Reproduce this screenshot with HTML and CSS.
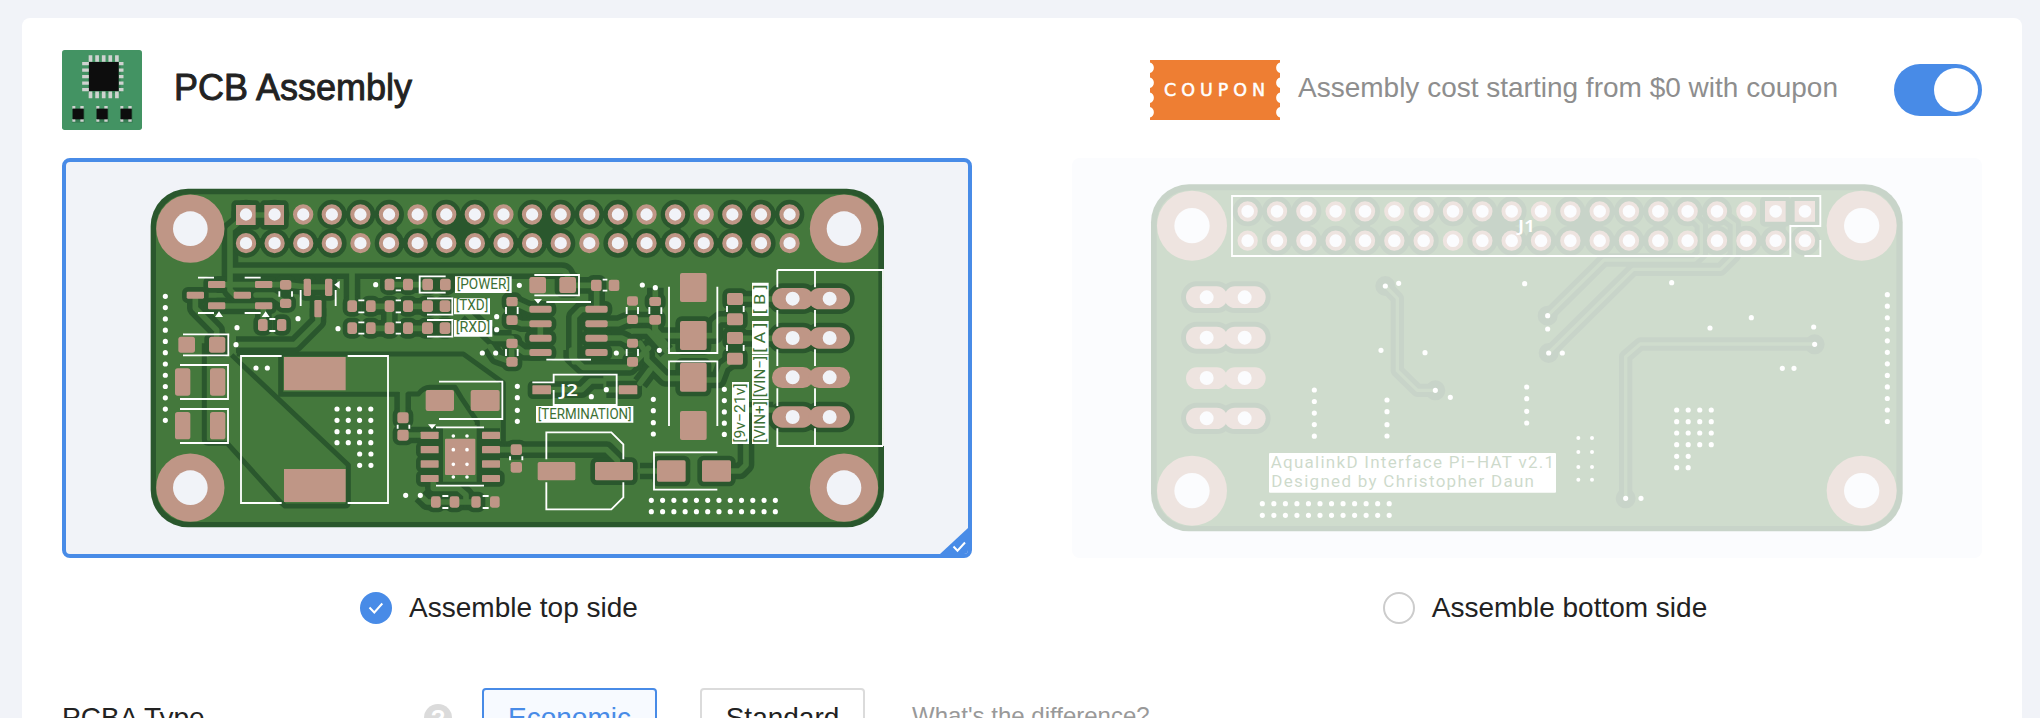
FILE: index.html
```html
<!DOCTYPE html>
<html lang="en">
<head>
<meta charset="utf-8">
<title>PCB Assembly</title>
<link rel="stylesheet" href="styles.css">
</head>
<body>
<main class="card">
  <header class="head">
    <svg class="logo" viewBox="0 0 240 240">
      <rect width="240" height="240" rx="8" fill="#439363"/>
      <g fill="#2c6b47" opacity=".55"><rect x="78" y="40" width="98" height="90" rx="3"/><rect x="30" y="176" width="38" height="42"/><rect x="102" y="176" width="38" height="42"/><rect x="174" y="176" width="38" height="42"/></g>
      <g stroke="#cfd2d0" fill="none">
        <path d="M80 25.500H172M80 134.500H172" stroke-width="20" stroke-dasharray="11 8.800"/>
        <path d="M70.500 36V128" stroke-width="20" stroke-dasharray="10 9.500"/>
        <path d="M177.500 36V128" stroke-width="14" stroke-dasharray="10 9.500"/>
        <path d="M31 172H211M31 211H211" stroke-width="8" stroke-dasharray="9 15 10 38"/>
      </g>
      <g fill="#0d0d0d"><rect x="81" y="36" width="89" height="87"/><rect x="32" y="176" width="33" height="32"/><rect x="104" y="176" width="33" height="32"/><rect x="176" y="176" width="33" height="32"/></g>
    </svg>
    <h1 class="title">PCB Assembly</h1>
    <svg class="coupon" viewBox="0 0 130 60">
      <path fill="#ee7e33" d="M0 0H130V2.500A5.500 5.500 0 0 0 130 13V17.500A5.500 5.500 0 0 0 130 28V32.500A5.500 5.500 0 0 0 130 43V47A5.500 5.500 0 0 0 130 57.500V60H0V57.500A5.500 5.500 0 0 0 0 47V43A5.500 5.500 0 0 0 0 32.500V28A5.500 5.500 0 0 0 0 17.500V13A5.500 5.500 0 0 0 0 2.500Z"/>
      <text class="coupon-text" x="14" y="36" textLength="101" lengthAdjust="spacing">COUPON</text>
    </svg>
    <span class="promo">Assembly cost starting from $0 with coupon</span>
    <span class="switch"><span class="knob"></span></span>
  </header>

  <section class="sides">
    <div class="side">
      <div class="preview selected">
        <svg class="board" viewBox="198 486 2706 1176">
          <defs>
            <g id="pads">
              <g transform="translate(420 540)">
                <path d="M288 75h59v60h-59zM373 75h59v60h-59z"/>
                <rect x="204" y="303" width="52" height="21" rx="4"/><rect x="345" y="303" width="52" height="21" rx="4"/>
                <rect x="140" y="335" width="52" height="21" rx="4"/><rect x="281" y="335" width="52" height="21" rx="4"/>
                <rect x="204" y="367" width="52" height="21" rx="4"/><rect x="345" y="367" width="52" height="21" rx="4"/>
                <rect x="420" y="300" width="34" height="29" rx="8"/><rect x="420" y="356" width="34" height="28" rx="8"/>
                <rect x="354" y="417" width="29" height="36" rx="8"/><rect x="411" y="417" width="28" height="36" rx="8"/>
                <rect x="491" y="296" width="22" height="52" rx="5"/><rect x="555" y="296" width="22" height="52" rx="5"/><rect x="523" y="360" width="22" height="52" rx="4"/>
                <rect x="622" y="361" width="29" height="35" rx="8"/><rect x="678" y="361" width="29" height="35" rx="8"/><rect x="734" y="361" width="29" height="35" rx="8"/>
                <rect x="622" y="427" width="29" height="35" rx="8"/><rect x="678" y="427" width="29" height="35" rx="8"/><rect x="734" y="427" width="29" height="35" rx="8"/>
                <rect x="734" y="296" width="29" height="35" rx="8"/>
                <rect x="207" y="470" width="49" height="48" rx="8"/>
              </g>
              <g transform="translate(1200 540)">
                <rect x="9" y="296" width="30" height="35" rx="8"/><rect x="67" y="296" width="32" height="35" rx="8"/><rect x="120" y="296" width="32" height="35" rx="8"/>
                <rect x="9" y="361" width="30" height="35" rx="8"/><rect x="66" y="361" width="33" height="35" rx="8"/><rect x="119" y="361" width="32" height="35" rx="8"/>
                <rect x="9" y="427" width="30" height="35" rx="8"/><rect x="66" y="427" width="33" height="35" rx="8"/><rect x="119" y="427" width="32" height="35" rx="8"/>
                <rect x="478" y="291" width="50" height="48" rx="7"/>
                <rect x="573" y="299" width="32" height="34" rx="7"/>
                <rect x="319" y="351" width="34" height="28" rx="7"/><rect x="319" y="406" width="34" height="29" rx="7"/><rect x="319" y="476" width="34" height="28" rx="7"/><rect x="319" y="531" width="34" height="29" rx="7"/>
                <rect x="388" y="377" width="67" height="21" rx="6"/><rect x="388" y="421" width="67" height="21" rx="6"/><rect x="388" y="464" width="67" height="21" rx="6"/><rect x="388" y="507" width="67" height="21" rx="6"/>
                <rect x="556" y="377" width="67" height="21" rx="6"/><rect x="556" y="421" width="67" height="21" rx="6"/><rect x="556" y="464" width="67" height="21" rx="6"/><rect x="556" y="507" width="67" height="21" rx="6"/>
                <rect x="681" y="405" width="33" height="27" rx="7"/><rect x="681" y="476" width="33" height="27" rx="7"/><rect x="681" y="531" width="33" height="29" rx="7"/>
                <rect x="748" y="351" width="35" height="27" rx="7"/><rect x="748" y="405" width="35" height="29" rx="7"/>
              </g>
              <g transform="translate(1920 540)">
                <rect x="120" y="423" width="80" height="87" rx="6"/>
                <rect x="261" y="339" width="48" height="36" rx="6"/><rect x="261" y="400" width="48" height="36" rx="6"/><rect x="261" y="456" width="48" height="36" rx="6"/><rect x="261" y="518" width="48" height="36" rx="6"/>
                <rect x="396" y="324" width="124" height="64" rx="32"/><rect x="506" y="324" width="124" height="64" rx="32"/>
                <rect x="396" y="442" width="124" height="64" rx="32"/><rect x="506" y="442" width="124" height="64" rx="32"/>
                <rect x="396" y="679" width="124" height="64" rx="32"/><rect x="506" y="679" width="124" height="64" rx="32"/>
                <rect x="120" y="548" width="80" height="87" rx="6"/>
                <rect x="51" y="841" width="86" height="64" rx="5"/><rect x="186" y="841" width="87" height="64" rx="5"/>
              </g>
              <g transform="translate(1170 1050)">
                <rect x="22" y="187" width="34" height="33" rx="7"/><rect x="22" y="239" width="34" height="33" rx="7"/>
                <rect x="92" y="245" width="54" height="22" rx="2"/><rect x="92" y="288" width="54" height="22" rx="2"/><rect x="92" y="331" width="54" height="22" rx="2"/><rect x="92" y="375" width="54" height="21" rx="2"/>
                <rect x="276" y="288" width="54" height="22" rx="2"/><rect x="276" y="375" width="54" height="21" rx="2"/>
                <rect x="123" y="439" width="29" height="34" rx="7"/><rect x="179" y="439" width="29" height="34" rx="7"/><rect x="244" y="439" width="28" height="34" rx="7"/>
                <rect x="427" y="106" width="56" height="27" rx="2"/><rect x="686" y="106" width="56" height="27" rx="2"/>
                <rect x="615" y="336" width="114" height="55" rx="5"/>
                <rect x="362" y="283" width="34" height="32" rx="7"/>
              </g>
            </g>
            <g id="pads-plain">
              <rect x="535" y="1010" width="50" height="48" rx="8"/>
              <g transform="translate(1200 540)"><rect x="388" y="291" width="50" height="49" rx="7"/><rect x="626" y="299" width="32" height="34" rx="7"/><rect x="681" y="349" width="33" height="28" rx="7"/></g>
              <g transform="translate(1920 540)"><rect x="120" y="279" width="80" height="87" rx="6"/><rect x="396" y="561" width="124" height="63" rx="31"/><rect x="506" y="561" width="124" height="63" rx="31"/><rect x="120" y="693" width="80" height="87" rx="6"/></g>
              <g transform="translate(420 1050)"><rect x="105" y="55" width="46" height="82" rx="8"/><rect x="210" y="55" width="46" height="82" rx="8"/><rect x="105" y="186" width="46" height="82" rx="8"/><rect x="210" y="186" width="46" height="82" rx="8"/><path d="M432 21h185v100h-185zM432 357h185v99h-185z"/></g>
              <g transform="translate(1170 1050)"><rect x="107" y="120" width="85" height="63" rx="6"/><rect x="242" y="120" width="87" height="63" rx="6"/><rect x="276" y="245" width="54" height="22" rx="2"/><rect x="276" y="331" width="54" height="22" rx="2"/><rect x="165" y="266" width="91" height="109" rx="3"/><rect x="362" y="336" width="34" height="32" rx="7"/><rect x="443" y="336" width="113" height="55" rx="5"/><rect x="300" y="439" width="29" height="34" rx="7"/></g>
            </g>
            <g id="tracks">
              <path transform="translate(420 540)" d="M318 105H403M318 108L270 148V330L285 345H307M270 272H1265Q1283 272 1283 295M166 346V385L230 450V490M288 494H465L534 425V385M230 314H437L500 321H566M230 378H370M348 345H400L437 370M370 378V435M636 380V272M692 379H748V445H692"/>
              <path transform="translate(1200 540)" d="M-30 314H84M24 379H82M24 445H82M528 316H573M590 320V388M421 432V474M421 388H388L335 364M335 420L365 431H421M335 490L372 517H421M523 545V410L545 388H590M590 431H655L681 420M590 474H665L698 490M698 453H745L800 515M698 420H765M800 495L765 455V420M335 545V490M200 400L280 475H335"/>
              <path transform="translate(1920 540)" d="M46 323V365M46 420V450L62 467H160M200 467H225V430L240 418H285M285 357H400M285 475H400M160 600H235L250 560L285 535M160 595H75L20 540V520L0 490M0 610L30 570M0 873H94M229 873H300L318 855V690H400"/>
              <path transform="translate(1170 1050)" d="M38 204V130M38 255H119M303 299H650L682 331V363M91 436L112 456H258M228 456V435L205 415H130V385M455 119H575L602 93H640M649 119H714M545 0V20L580 52H720L775 -5M300 -10L320 20L365 36"/>
            </g>
          </defs>
          <rect x="452" y="566" width="2200" height="1016" rx="112" class="dark"/>
          <rect x="468" y="583" width="2167" height="983" rx="98" class="green"/>
          <g class="gap">
            <path transform="translate(420 1050)" d="M193 -20V268Q193 280 205 280H262L420 455L435 468H615Q625 468 625 455V345L275 15M422 10V133H775V190"/>
            <path transform="translate(1170 1050)" d="M-460 12H220L340 98V275M55 190V132H85Q100 113 120 112H195L215 145L262 215V260"/>
          </g>
          <g class="clear">
            <use href="#tracks" class="clear-track"/>
            <use href="#pads" class="clear-pad"/>
            <g class="halo">
              <path d="M738 643.500h0M824 643.500h0M996 643.500h0M1082 643.500h0M1168 643.500h0M1339 643.500h0M1425 643.500h0M1597 643.500h0M1682 643.500h0M1768 643.500h0M1854 643.500h0M2026 643.500h0M2197 643.500h0M2283 643.500h0M2369 643.500h0" class="round"/>
              <path d="M738 729.500h0M824 729.500h0M910 729.500h0M996 729.500h0M1168 729.500h0M1253 729.500h0M1339 729.500h0M1425 729.500h0M1511 729.500h0M1597 729.500h0M1682 729.500h0M1854 729.500h0M1940 729.500h0M2026 729.500h0M2111 729.500h0M2197 729.500h0M2283 729.500h0" class="round"/>
            </g>
            <path class="dark" d="M1339 640h86v90h-86zM1597 640h86v90h-86zM2197 640h86v90h-86zM996 715h-258v28h258zM1168 715h515v28h-515zM1854 715h429v28h-429zM1145 660h45v50h-45zM2010 660h32v50h-32zM1838 660h32v50h-32z"/>
            <path class="dark" d="M1258 1285H1500V1455H1258z"/>
            <path class="green" d="M1329 1275H1430V1445H1329z"/>
          </g>
          <use href="#tracks" class="track"/>
          <g class="copper"><use href="#pads"/><use href="#pads-plain"/></g>
          <path class="ring" d="M909.500 643.500H2400M738 729.500H2400"/>
          <path class="drill" d="M738 643.500H2400M738 729.500H2400"/>
          <g class="copper"><circle cx="571" cy="686" r="102.500"/><circle cx="571" cy="1463" r="102.500"/><circle cx="2532" cy="686" r="102.500"/><circle cx="2532" cy="1463" r="102.500"/></g>
          <g class="void"><circle cx="571" cy="686" r="52"/><circle cx="571" cy="1463" r="52"/><circle cx="2532" cy="686" r="52"/><circle cx="2532" cy="1463" r="52"/></g>
          <path class="terminal" d="M2378 896h0M2489 896h0M2378 1014h0M2489 1014h0M2378 1132h0M2489 1132h0M2378 1251h0M2489 1251h0"/>
          <g class="silk">
            <path transform="translate(420 540)" d="M174 293H222M314 293H362M174 399H222M314 399H362M482 330V378M587 330V378M129 463H265V526H129M418 334V350M456 334V350M388 417H406M388 453H406M655 361H673M655 397H673M655 427H673M655 461H673M767 294H783M767 331H783M767 361H783M767 397H783M767 427H783M767 461H783"/>
            <path transform="translate(420 1050)" d="M425 18H303V459H425M623 18H744V459H623M120 45H264V147H120M120 177H264V279H120"/>
            <path transform="translate(1200 540)" d="M137 289H59V338H137M81 355H157V404H81M81 420H157V470H81M403 285H537V346H403M439 366H573M439 539H573M608 299H622M608 332H622M318 381V402M353 381V402M318 507V528M353 507V528M680 381V402M714 381V402M680 507V528M714 507V528M748 381V402"/>
            <path transform="translate(1920 540)" d="M87 320V519H232V320M64 382V402M261 378V396M311 378V396M261 495V513M311 495V513M729 798H412V745M412 270V322M412 390V440M412 508V558M412 625V678M525 270V322M525 390V440M525 508V558M525 625V678M525 745V798M412 270H729V798M87 738V544H232V738M232 817H42V929H232"/>
            <path transform="translate(1170 1050)" d="M147 95H337V207H147M138 232H282M138 407H282M157 438H175M157 474H175M278 438H296M278 474H296M23 224V236M58 224V236M360 319V331M397 319V331M427 97H491V74H680V165H491V120M469 328V247H664L700 283V328M469 397V478H664L700 442V397"/>
          </g>
          <g class="white">
            <path d="M645 951L657 934L669 951zM785 951L797 934L809 951zM1003 854L1019 842V866zM1602 897H1626L1614 911zM1284 1273H1308L1296 1287z"/>
            <path d="M1365 829h170v50h-170zM1362 895h108v48h-108zM1362 960h115v50h-115zM1608 1218h292v50h-292zM2256 848h50v100h-50zM2256 963h50v100h-50zM2256 1065h50v132h-50zM2256 1200h50v132h-50zM2196 1146h51v186h-51z"/>
          </g>
          <g class="via">
            <path d="M711 983h0M708 1034h0M894 956h0M1014 986h0M1127 854h0M1558 856h0M1490 950h0M1490 989h0M1447 1059h0M1487 1059h0M1927 855h0M1966 863h0M1849 1059h0M1978 1051h0M768 1104h0M802 1104h0M1217 1486h0M1261 1486h0M1552 1159h0M1552 1193h0M1552 1231h0M1552 1264h0M1774 1190h0M1819 1169h0M1960 1198h0M1960 1232h0M1960 1268h0M1960 1302h0"/>
            <path stroke-dasharray="0 33.820" d="M496 889V1265M1011 1227H1115M1011 1261H1115M1011 1295H1115M1011 1328H1115M1079 1362H1115M1079 1396H1115M2173 1168V1306M1954 1501H2330M1954 1535H2330"/>
            <path stroke-width="11" d="M1360 1308h0M1401 1308h0M1360 1349h0M1401 1349h0M1360 1393h0M1401 1393h0M1360 1431h0M1401 1431h0"/>
          </g>
          <g class="label">
            <text x="1370" y="866" textLength="160" lengthAdjust="spacingAndGlyphs">[POWER]</text>
            <text x="1367" y="931" textLength="98" lengthAdjust="spacingAndGlyphs">[TXD]</text>
            <text x="1367" y="997" textLength="104" lengthAdjust="spacingAndGlyphs">[RXD]</text>
            <text x="1613" y="1256" textLength="282" lengthAdjust="spacingAndGlyphs">[TERMINATION]</text>
            <text transform="translate(2294 943) rotate(-90)" textLength="90" lengthAdjust="spacingAndGlyphs" xml:space="preserve">[ B ]</text>
            <text transform="translate(2294 1058) rotate(-90)" textLength="90" lengthAdjust="spacingAndGlyphs" xml:space="preserve">[ A ]</text>
            <text transform="translate(2294 1192) rotate(-90)" textLength="124" lengthAdjust="spacingAndGlyphs">[VIN−]</text>
            <text transform="translate(2294 1328) rotate(-90)" textLength="124" lengthAdjust="spacingAndGlyphs">[VIN+]</text>
            <text transform="translate(2234 1328) rotate(-90)" textLength="178" lengthAdjust="spacingAndGlyphs">[9v−21v]</text>
            <text class="ref" x="1680" y="1187" textLength="54" lengthAdjust="spacingAndGlyphs">J2</text>
          </g>
        </svg>
        <svg class="corner" viewBox="0 0 32 30"><path fill="#488be7" d="M0 26L28 0H32V30H0Z"/><path d="M13.500 18.500L17.500 22.700L25 14.500" fill="none" stroke="#fff" stroke-width="2"/></svg>
      </div>
      <div class="choice choice-top">
        <svg class="radio" viewBox="0 0 32 32"><circle cx="16" cy="16" r="16" fill="#488be7"/><path d="M9.500 15.500L14.300 20.500L22.300 11.500" fill="none" stroke="#fff" stroke-width="2"/></svg>
        <span>Assemble top side</span>
      </div>
    </div>

    <div class="side">
      <div class="preview faded">
        <svg class="board" viewBox="3216 474 2730 1200">
          <defs>
            <g id="pads-b">
              <rect x="378" y="409" width="124" height="65" rx="32"/><rect x="493" y="409" width="124" height="65" rx="32"/>
              <rect x="378" y="530" width="124" height="66" rx="32"/><rect x="493" y="530" width="124" height="66" rx="32"/>
              <rect x="378" y="773" width="124" height="64" rx="32"/><rect x="493" y="773" width="124" height="64" rx="32"/>
              <path d="M2115 153h62v62h-62zM2204 153h61v62h-61z"/>
            </g>
            <path id="tracks-b" d="M976 408L1012 445V662L1072 721H1126M1463 497L1632 330H1903L1924 311V225L1883 184M1466 609L1720 358H1982L2023 317V222L1971 184M1697 1045V620L1741 582H2264"/>
          </defs>
          <g transform="translate(3180 450)">
            <rect x="273" y="103" width="2255" height="1041" rx="114" class="dark"/>
            <rect x="290" y="121" width="2219" height="1007" rx="100" class="green"/>
            <use href="#tracks-b" class="clear-track-b"/>
            <use href="#pads-b" class="clear-pad-b"/>
            <path class="halo-b" d="M563 184h0M651 184h0M739 184h0M915 184h0M1091 184h0M1179 184h0M1267 184h0M1355 184h0M1531 184h0M1619 184h0M1707 184h0M1795 184h0M1883 184h0M1971 184h0M651 272h0M739 272h0M827 272h0M915 272h0M1003 272h0M1091 272h0M1267 272h0M1355 272h0M1443 272h0M1531 272h0M1619 272h0M1707 272h0M1795 272h0M1971 272h0M2059 272h0M2147 272h0M2235 272h0"/>
            <path class="dark" d="M651 184h88v88h-88zM1267 184h88v88h-88zM1531 184h88v88h-88zM2147 184h30v88h-30zM651 257h440v30h-440zM1267 257h528v30h-528zM1971 257h176v30h-176zM900 205h30v45h-30zM1077 205h30v45h-30zM1780 205h30v45h-30z"/>
            <path class="via-halo" d="M976 408h0M1126 721h0M1463 497h0M1466 609h0M1697 1045h0M2264 583h0"/>
            <use href="#tracks-b" class="track-b"/>
            <g class="copper">
              <use href="#pads-b"/>
              <rect x="378" y="652" width="124" height="65" rx="32"/><rect x="493" y="652" width="124" height="65" rx="32"/>
            </g>
            <path class="ring-b" d="M563 184H2100M563 272H2250"/>
            <path class="drill-b" d="M563 184H2250M563 272H2250"/>
            <g class="copper"><circle cx="396" cy="227" r="105"/><circle cx="396" cy="1022" r="105"/><circle cx="2405" cy="227" r="105"/><circle cx="2405" cy="1022" r="105"/></g>
            <g class="void"><circle cx="396" cy="227" r="53"/><circle cx="396" cy="1022" r="53"/><circle cx="2405" cy="227" r="53"/><circle cx="2405" cy="1022" r="53"/></g>
            <path class="terminal" d="M440 442h0M554 442h0M440 563h0M554 563h0M440 684h0M554 684h0M440 805h0M554 805h0"/>
            <path class="silk" d="M516 138H2281V228H2191V318H516ZM2281 270V318H2233"/>
            <rect x="627" y="909" width="861" height="119" rx="3" fill="#fff"/>
            <g class="via">
              <path d="M976 408h0M1016 400h0M963 601h0M1095 608h0M1126 721h0M1171 742h0M1394 401h0M1463 497h0M1463 537h0M1466 609h0M1507 609h0M1835 398h0M1950 534h0M2074 503h0M2261 531h0M2264 583h0M2167 655h0M2202 655h0M1697 1045h0M1743 1045h0M981 750h0M981 785h0M981 824h0M981 858h0M1400 711h0M1400 746h0M1400 784h0M1400 819h0"/>
              <path stroke-dasharray="0 34.600" d="M763 720V862M2482 434V818M1850 780H1958M1850 815H1958M1850 849H1958M1850 884H1958M1850 919H1888M1850 953H1888M607 1061H992M607 1096H992"/>
              <path stroke-width="12" d="M1555 864h0M1596 864h0M1555 906h0M1596 906h0M1555 951h0M1596 951h0M1555 989h0M1596 989h0"/>
            </g>
            <g class="label label-b">
              <text x="632" y="955" textLength="850" lengthAdjust="spacing">AqualinkD Interface Pi−HAT v2.1</text>
              <text x="634" y="1010" textLength="788" lengthAdjust="spacing">Designed by Christopher Daun</text>
              <text class="ref" x="1374" y="245" textLength="52" lengthAdjust="spacingAndGlyphs">J1</text>
            </g>
          </g>
        </svg>
      </div>
      <div class="choice choice-bottom">
        <svg class="radio" viewBox="0 0 32 32"><circle cx="16" cy="16" r="15" fill="#fff" stroke="#ccc" stroke-width="2"/></svg>
        <span>Assemble bottom side</span>
      </div>
    </div>
  </section>

  <section class="type-row">
    <span class="type-label">PCBA Type</span>
    <span class="help">?</span>
    <span class="option active">Economic</span>
    <span class="option standard">Standard</span>
    <span class="diff">What's the difference?</span>
  </section>
</main>
</body>
</html>
```
FILE: styles.css
```css
* { box-sizing: border-box; }
html, body { margin: 0; height: 718px; overflow: hidden; }
body {
  --void: #f1f3f8;
  padding: 18px 18px 0 22px;
  background: #f1f3f8;
  color: #222;
  font: 28px/32px "Liberation Sans", Arial, sans-serif;
}
svg { display: block; flex: none; }
.card {
  height: 800px;
  padding: 32px 40px 0;
  background: #fff;
  border-radius: 8px;
}
.head { display: flex; align-items: center; height: 80px; }
.logo { width: 80px; height: 80px; }
.title {
  margin: 0 auto 4px 32px;
  font-size: 36px;
  line-height: 44px;
  font-weight: 400;
  -webkit-text-stroke: .9px #222;
}
.coupon { width: 130px; height: 60px; }
.coupon-text { font: 17.5px "DejaVu Sans", sans-serif; fill: #fff; stroke: #fff; stroke-width: .5; }
.promo { margin: 0 56px 4px 18px; color: #8e8e8e; white-space: nowrap; }
.switch {
  display: flex;
  justify-content: flex-end;
  width: 88px;
  height: 52px;
  padding: 4px;
  border-radius: 26px;
  background: #488be7;
}
.knob { width: 44px; height: 44px; border-radius: 50%; background: #fff; }

.sides { display: flex; justify-content: space-between; margin-top: 28px; }
.side { width: 910px; }
.preview { position: relative; height: 400px; border-radius: 8px; background: var(--void); overflow: hidden; }
.selected { border: 4px solid #488be7; }
.faded { --void: #f0f4fc; opacity: .25; }
.board { width: 100%; height: 100%; }
.corner { position: absolute; right: -4px; bottom: -4px; width: 32px; height: 30px; }
.choice { display: flex; align-items: center; justify-content: center; gap: 17px; margin-top: 34px; height: 32px; }
.choice-top { padding-right: 36px; }
.choice-bottom { padding-left: 36px; }
.radio { width: 32px; height: 32px; }

.dark { fill: #2a572d; }
.green { fill: #44783c; }
.copper { fill: #bf9686; }
.void { fill: var(--void); }
.white { fill: #fff; }
.gap { fill: none; stroke: #2a572d; stroke-width: 15; stroke-linejoin: round; }
.clear-track { fill: none; stroke: #2a572d; stroke-width: 50; stroke-linejoin: round; }
.clear-pad { fill: #2a572d; stroke: #2a572d; stroke-width: 28; stroke-linejoin: round; }
.halo { fill: none; stroke: #2a572d; }
.round { stroke-width: 88; stroke-linecap: round; }
.track { fill: none; stroke: #44783c; stroke-width: 17; stroke-linejoin: round; stroke-linecap: round; }
.ring, .drill, .ring-b, .drill-b, .terminal, .via, .halo-b, .via-halo { fill: none; stroke-linecap: round; }
.ring { stroke: #bf9686; stroke-width: 61; stroke-dasharray: 0 85.830; }
.drill { stroke: var(--void); stroke-width: 37; stroke-dasharray: 0 85.830; }
.ring-b { stroke: #bf9686; stroke-width: 61; stroke-dasharray: 0 88; }
.drill-b { stroke: var(--void); stroke-width: 38; stroke-dasharray: 0 88; }
.terminal { stroke: var(--void); stroke-width: 42; }
.via { stroke: #fff; stroke-width: 15.500; }
.silk { fill: none; stroke: #fff; stroke-width: 5.500; }
.clear-track-b { fill: none; stroke: #2a572d; stroke-width: 40; stroke-linejoin: round; }
.clear-pad-b { fill: #2a572d; stroke: #2a572d; stroke-width: 30; stroke-linejoin: round; }
.track-b { fill: none; stroke: #44783c; stroke-width: 10; stroke-linejoin: round; }
.halo-b { stroke: #2a572d; stroke-width: 90; }
.via-halo { stroke: #2a572d; stroke-width: 60; }
.label { fill: #3c7034; font: 400 43px Roboto, "Liberation Sans", sans-serif; }
.label-b { font-size: 51px; }
.ref { fill: #fff; font: 600 50px "Noto Sans", sans-serif; }

.type-row { display: flex; align-items: center; margin-top: 64px; height: 60px; }
.type-label { width: 362px; }
.help {
  width: 28px;
  height: 28px;
  margin-right: 30px;
  border-radius: 50%;
  background: #dbdbdb;
  color: #fff;
  font-size: 24px;
  line-height: 29px;
  font-weight: 700;
  text-align: center;
}
.option {
  display: flex;
  align-items: center;
  justify-content: center;
  height: 60px;
  border: 2px solid #dbdbdb;
  border-radius: 4px;
}
.active { width: 175px; margin-right: 43px; border-color: #488be7; background: #f7faff; color: #488be7; }
.standard { width: 165px; margin-right: 47px; }
.diff { margin-bottom: 4px; color: #999; font-size: 24px; }
```
